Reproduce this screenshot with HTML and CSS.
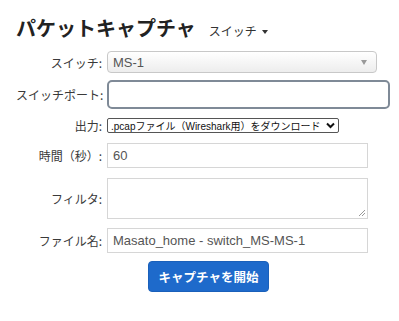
FILE: index.html
```html
<!DOCTYPE html>
<html lang="ja">
<head>
<meta charset="utf-8">
<link rel="stylesheet" href="styles.css">
</head>
<body>
<div class="page">
  <h1 class="title">パケットキャプチャ<span class="sub">スイッチ<span class="caret"></span></span></h1>
  <div class="form">
    <div class="row r1">
      <div class="label">スイッチ:</div>
      <div class="ctl select-bs">MS-1<span class="sel-arrow"></span></div>
    </div>
    <div class="row r2">
      <div class="label">スイッチポート:</div>
      <div class="ctl input-focus"></div>
    </div>
    <div class="row r3">
      <div class="label">出力:</div>
      <div class="ctl native-select">.pcapファイル（Wireshark用）をダウンロード<svg class="chev" width="9" height="7" viewBox="0 0 9 7"><path d="M1 1.5 L4.5 5 L8 1.5" fill="none" stroke="#111" stroke-width="2"/></svg></div>
    </div>
    <div class="row r4">
      <div class="label">時間（秒）:</div>
      <div class="ctl input">60</div>
    </div>
    <div class="row r5">
      <div class="label">フィルタ:</div>
      <div class="ctl textarea"><svg class="grip" width="8" height="8" viewBox="0 0 8 8"><path d="M1 7 L7 1 M4 7 L7 4" stroke="#999" stroke-width="1"/></svg></div>
    </div>
    <div class="row r6">
      <div class="label">ファイル名:</div>
      <div class="ctl input">Masato_home - switch_MS-MS-1</div>
    </div>
    <div class="actions">
      <div class="btn">キャプチャを開始</div>
    </div>
  </div>
</div>
</body>
</html>
```
FILE: styles.css
```css
html, body {
  margin: 0;
  padding: 0;
  background: #fff;
}
body {
  font-family: "Liberation Sans", "Noto Sans CJK JP", sans-serif;
  color: #333;
}
.page {
  padding: 16px 0 0 16px;
}
.title {
  margin: 0;
  font-family: "Noto Sans CJK JP", sans-serif;
  font-size: 20px;
  line-height: 24px;
  font-weight: 700;
  color: #222;
  display: flex;
  align-items: baseline;
}
.sub {
  font-size: 12px;
  font-weight: 400;
  color: #333;
  margin-left: 13px;
  display: inline-flex;
  align-items: center;
}
.caret {
  display: inline-block;
  width: 0;
  height: 0;
  border-left: 3.5px solid transparent;
  border-right: 3.5px solid transparent;
  border-top: 4px solid #333;
  margin-left: 5px;
  margin-top: 2px;
}
.form {
  display: flex;
  flex-direction: column;
  margin-top: 8px;
}
.row {
  display: flex;
  align-items: center;
}
.label {
  width: 86px;
  margin-right: 5px;
  text-align: right;
  font-size: 12px;
  font-family: "Noto Sans CJK JP", sans-serif;
  color: #3a3a3a;
  white-space: nowrap;
}
.ctl {
  box-sizing: border-box;
  font-size: 13px;
  color: #555;
  position: relative;
  display: flex;
  align-items: center;
}
.r1 .ctl { width: 270px; height: 22px; }
.r2 { margin-top: 7px; }
.r2 .ctl { width: 283px; height: 29px; }
.r3 { margin-top: 8px; }
.r3 .ctl { width: 232px; height: 15px; }
.r4 { margin-top: 9px; }
.r4 .ctl { width: 261px; height: 25px; }
.r5 { margin-top: 10px; }
.r5 .ctl { width: 261px; height: 41px; }
.r6 { margin-top: 9px; }
.r6 .ctl { width: 261px; height: 25px; }

.select-bs {
  border: 1px solid #c8c8c8;
  border-radius: 4px;
  background: linear-gradient(#ffffff, #ededed);
  padding-left: 5px;
  justify-content: space-between;
  padding-right: 9px;
}
.sel-arrow {
  width: 0;
  height: 0;
  border-left: 3px solid transparent;
  border-right: 3px solid transparent;
  border-top: 5px solid #999;
}
.input-focus {
  border: 2px solid #7f8a97;
  border-radius: 5px;
  background: #fff;
}
.native-select {
  border: 1px solid #555;
  border-radius: 2px;
  font-size: 10px;
  color: #111;
  padding-left: 3px;
  justify-content: space-between;
  padding-right: 3px;
  white-space: nowrap;
  overflow: hidden;
}
.chev {
  flex: none;
}
.input {
  border: 1px solid #d6d6d6;
  padding-left: 5px;
  background: #fff;
}
.textarea {
  border: 1px solid #d6d6d6;
  background: #fff;
}
.grip {
  position: absolute;
  right: 1px;
  bottom: 1px;
}
.actions {
  margin-top: 8px;
  padding-left: 132px;
  display: flex;
}
.btn {
  box-sizing: border-box;
  width: 121px;
  height: 31px;
  background: #1e6acb;
  border: 1px solid #1a60ba;
  border-radius: 4px;
  color: #fff;
  font-family: "Noto Sans CJK JP", sans-serif;
  font-weight: 700;
  font-size: 12.5px;
  display: flex;
  align-items: center;
  justify-content: center;
}
```
